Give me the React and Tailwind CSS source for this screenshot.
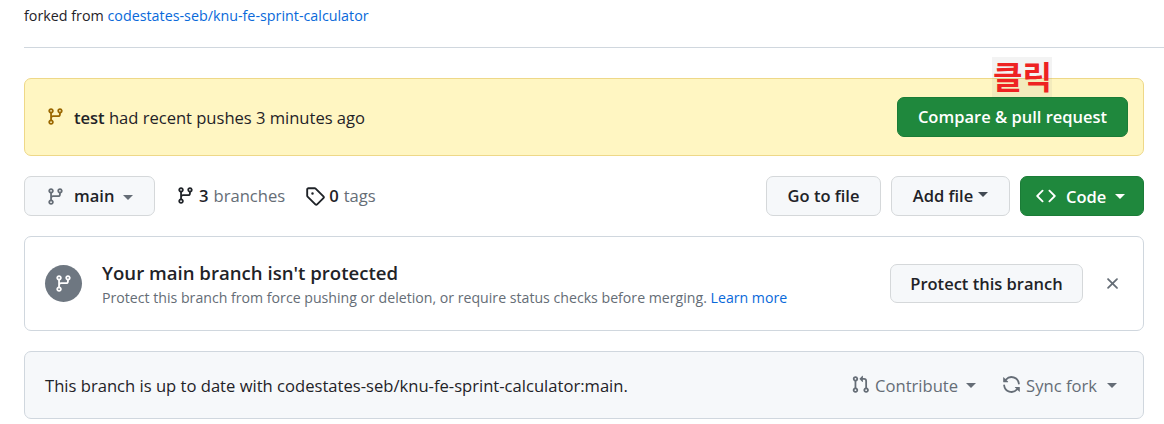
const GitBranch = ({ className }) => (
  <svg viewBox="0 0 16 16" fill="currentColor" className={className}>
    <path d="M9.5 3.25a2.25 2.25 0 1 1 3 2.122V6A2.5 2.5 0 0 1 10 8.5H6a1 1 0 0 0-1 1v1.128a2.251 2.251 0 1 1-1.5 0V5.372a2.25 2.25 0 1 1 1.5 0v1.836A2.493 2.493 0 0 1 6 7h4a1 1 0 0 0 1-1v-.628A2.25 2.25 0 0 1 9.5 3.25Zm-6 0a.75.75 0 1 0 1.5 0 .75.75 0 0 0-1.5 0Zm8.25-.75a.75.75 0 1 0 0 1.5.75.75 0 0 0 0-1.5ZM4.25 12a.75.75 0 1 0 0 1.5.75.75 0 0 0 0-1.5Z" />
  </svg>
);
const Tag = ({ className }) => (
  <svg viewBox="0 0 16 16" fill="currentColor" className={className}>
    <path d="M1 7.775V2.75C1 1.784 1.784 1 2.75 1h5.025c.464 0 .91.184 1.238.513l6.25 6.25a1.75 1.75 0 0 1 0 2.474l-5.026 5.026a1.75 1.75 0 0 1-2.474 0l-6.25-6.25A1.752 1.752 0 0 1 1 7.775Zm1.5 0c0 .066.026.13.073.177l6.25 6.25a.25.25 0 0 0 .354 0l5.025-5.025a.25.25 0 0 0 0-.354l-6.25-6.25a.25.25 0 0 0-.177-.073H2.75a.25.25 0 0 0-.25.25ZM6 5a1 1 0 1 1 0 2 1 1 0 0 1 0-2Z" />
  </svg>
);
const Code = ({ className }) => (
  <svg viewBox="0 0 16 16" fill="currentColor" className={className}>
    <path d="m11.28 3.22 4.25 4.25a.75.75 0 0 1 0 1.06l-4.25 4.25a.749.749 0 0 1-1.275-.326.749.749 0 0 1 .215-.734L13.94 8l-3.72-3.72a.749.749 0 0 1 .326-1.275.749.749 0 0 1 .734.215Zm-6.56 0a.751.751 0 0 1 1.042.018.751.751 0 0 1 .018 1.042L2.06 8l3.72 3.72a.749.749 0 0 1-.326 1.275.749.749 0 0 1-.734-.215L.47 8.53a.75.75 0 0 1 0-1.06Z" />
  </svg>
);
const Close = ({ className }) => (
  <svg viewBox="0 0 16 16" fill="currentColor" className={className}>
    <path d="M3.72 3.72a.75.75 0 0 1 1.06 0L8 6.94l3.22-3.22a.749.749 0 0 1 1.275.326.749.749 0 0 1-.215.734L9.06 8l3.22 3.22a.749.749 0 0 1-.326 1.275.749.749 0 0 1-.734-.215L8 9.06l-3.22 3.22a.751.751 0 0 1-1.042-.018.751.751 0 0 1-.018-1.042L6.94 8 3.72 4.78a.75.75 0 0 1 0-1.06Z" />
  </svg>
);
const PullRequest = ({ className }) => (
  <svg viewBox="0 0 16 16" fill="currentColor" className={className}>
    <path d="M1.5 3.25a2.25 2.25 0 1 1 3 2.122v5.256a2.251 2.251 0 1 1-1.5 0V5.372A2.25 2.25 0 0 1 1.5 3.25Zm5.677-.177L9.573.677A.25.25 0 0 1 10 .854V2.5h1A2.5 2.5 0 0 1 13.5 5v5.628a2.251 2.251 0 1 1-1.5 0V5a1 1 0 0 0-1-1h-1v1.646a.25.25 0 0 1-.427.177L7.177 3.427a.25.25 0 0 1 0-.354ZM3.75 2.5a.75.75 0 1 0 0 1.5.75.75 0 0 0 0-1.5Zm0 9.5a.75.75 0 1 0 0 1.5.75.75 0 0 0 0-1.5Zm8.25.75a.75.75 0 1 0 1.5 0 .75.75 0 0 0-1.5 0Z" />
  </svg>
);
const Sync = ({ className }) => (
  <svg viewBox="0 0 16 16" fill="currentColor" className={className}>
    <path d="M1.705 8.005a.75.75 0 0 1 .834.656 5.5 5.5 0 0 0 9.592 2.97l-1.204-1.204a.25.25 0 0 1 .177-.427h3.646a.25.25 0 0 1 .25.25v3.646a.25.25 0 0 1-.427.177l-1.38-1.38A7.002 7.002 0 0 1 1.05 8.84a.75.75 0 0 1 .656-.834ZM8 2.5a5.487 5.487 0 0 0-4.131 1.869l1.204 1.204A.25.25 0 0 1 4.896 6H1.25A.25.25 0 0 1 1 5.75V2.104a.25.25 0 0 1 .427-.177l1.38 1.38A7.002 7.002 0 0 1 14.95 7.16a.75.75 0 0 1-1.49.178A5.5 5.5 0 0 0 8 2.5Z" />
  </svg>
);
const Caret = ({ className }) => (
  <span className={"inline-block w-0 h-0 border-x-[5px] border-x-transparent border-t-[5px] border-t-current " + className} />
);

export default function App() {
  return (
    <div className="relative h-[424px] w-[1164px] overflow-hidden bg-white text-[#1f2328] font-['Open_Sans','Noto_Sans',sans-serif]">
      <div className="h-[48px] ml-6 border-b border-[#d0d7de] pt-[6px]">
        <p className="text-[14.3px] leading-[20px]">
          forked from <a className="text-[#0969da]">codestates-seb/knu-fe-sprint-calculator</a>
        </p>
      </div>

      <div className="ml-6 mr-5 mt-[30px] flex flex-col">
        <div className="h-[78px] rounded-[7px] border border-[#eed888] bg-[#fff6c2] flex items-center justify-between pl-[21px] pr-[15px]">
          <div className="flex items-center gap-[9px] text-[16.6px] tracking-[-0.03px]">
            <GitBranch className="w-[19px] h-[19px] text-[#9a6700]" />
            <span className="mt-[2px]"><b className="font-semibold">test</b> had recent pushes 3 minutes ago</span>
          </div>
          <button className="h-[40px] w-[231px] rounded-[7px] bg-[#1f883d] border border-[#1b7c37] text-white font-semibold text-[16.5px] pt-[1px] flex items-center justify-center">
            Compare &amp; pull request
          </button>
        </div>

        <div className="mt-5 h-[40px] flex items-center justify-between">
          <div className="flex items-center">
            <button className="h-[40px] w-[131px] rounded-[7px] bg-[#f6f8fa] border border-[#d5d8da] flex items-center pl-[21px] text-[16.5px] font-semibold">
              <GitBranch className="w-[19px] h-[19px] text-[#656d76]" />
              <span className="ml-[9px]">main</span>
              <Caret className="ml-[9px] mt-[2px] text-[#656d76]" />
            </button>
            <div className="ml-[21px] flex items-center text-[16.6px]">
              <GitBranch className="w-[19px] h-[19px]" />
              <b className="ml-[4px] font-semibold">3</b>
              <span className="ml-[5px] text-[#656d76]">branches</span>
            </div>
            <div className="ml-[20px] flex items-center text-[16.6px]">
              <Tag className="w-[20px] h-[20px]" />
              <b className="ml-[4px] font-semibold">0</b>
              <span className="ml-[5px] text-[#656d76]">tags</span>
            </div>
          </div>
          <div className="flex items-center gap-[10px] text-[16.5px] font-semibold">
            <button className="h-[40px] w-[115px] rounded-[7px] bg-[#f6f8fa] border border-[#d5d8da]">Go to file</button>
            <button className="h-[40px] w-[119px] rounded-[7px] bg-[#f6f8fa] border border-[#d5d8da] flex items-center justify-center">
              Add file<Caret className="ml-[5px] -mt-[3px] text-[#424a53]" />
            </button>
            <button className="h-[40px] w-[124px] rounded-[7px] bg-[#1f883d] border border-[#1b7c37] text-white flex items-center pl-[15px]">
              <Code className="w-[20px] h-[20px]" />
              <span className="ml-[10px] mt-[2px]">Code</span>
              <Caret className="ml-[9px] text-white" />
            </button>
          </div>
        </div>

        <div className="mt-5 h-[95px] rounded-[7px] border border-[#d0d7de] flex items-center pl-5 pr-[21px]">
          <div className="w-[37px] h-[37px] rounded-full bg-[#6e7781] text-white flex items-center justify-center shrink-0">
            <GitBranch className="w-[19px] h-[19px]" />
          </div>
          <div className="ml-5 flex-1 pt-[4px]">
            <div className="text-[18.6px] leading-[24px] font-semibold">Your main branch isn't protected</div>
            <div className="text-[14.15px] leading-[26px] text-[#656d76]">
              Protect this branch from force pushing or deletion, or require status checks before merging. <a className="text-[#0969da]">Learn more</a>
            </div>
          </div>
          <button className="h-[39px] w-[193px] rounded-[7px] bg-[#f6f8fa] border border-[#d5d8da] pt-[2px] text-[16.5px] font-semibold">Protect this branch</button>
          <Close className="ml-[20px] w-[19px] h-[19px] text-[#656d76]" />
        </div>

        <div className="mt-5 h-[68px] rounded-[7px] border border-[#d0d7de] bg-[#f6f8fa] flex items-center justify-between pl-5 pr-[26px] text-[16.6px]">
          <span className="mt-[2px]">This branch is up to date with codestates-seb/knu-fe-sprint-calculator:main.</span>
          <div className="flex items-center text-[#656d76]">
            <PullRequest className="w-[19px] h-[19px]" />
            <span className="ml-[5px] mt-[2px]">Contribute</span>
            <Caret className="ml-[8px] mt-[2px]" />
            <Sync className="ml-[26px] w-[19px] h-[19px]" />
            <span className="ml-[5px] mt-[2px]">Sync fork</span>
            <Caret className="ml-[10px] mt-[2px]" />
          </div>
        </div>
      </div>

      <div className="absolute left-[992px] top-[57px] w-[60px] h-[40px] bg-[#8a8a8a]/10 flex items-center justify-center pb-[5px] pl-[1px] text-[#ee2222] font-bold text-[32px] leading-none font-['Noto_Sans_CJK_KR',sans-serif]">
        클릭
      </div>
    </div>
  );
}
